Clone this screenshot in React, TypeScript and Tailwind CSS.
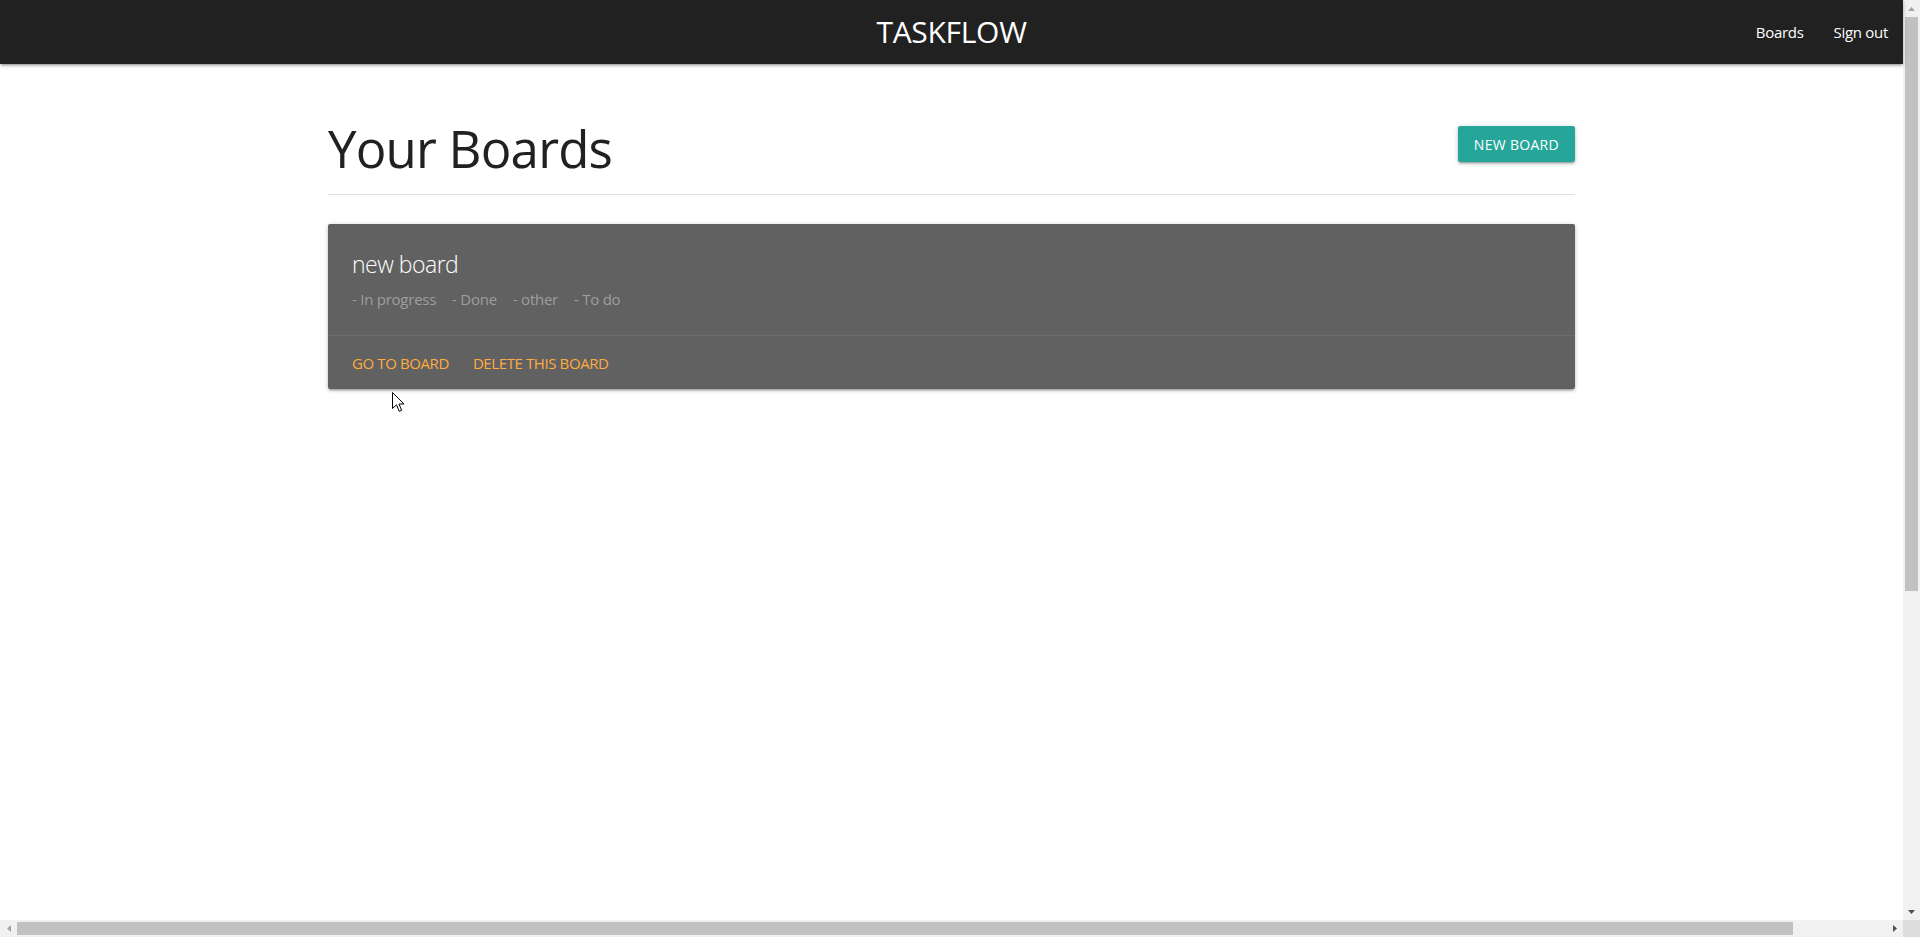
import React from "react";

const FONT = { fontFamily: '"Open Sans", "Noto Sans", sans-serif' };

function Cursor() {
  return (
    <svg width="13" height="21" viewBox="0 0 13 21" className="absolute left-[392px] top-[392px] z-50">
      <path
        d="M0.5 0.5 L0.5 16.5 L4.5 12.8 L7.2 19.3 L9.6 18.3 L7 12 L12 12 Z"
        fill="#ffffff"
        stroke="#000000"
        strokeWidth="1"
        strokeLinejoin="miter"
      />
    </svg>
  );
}

function VScrollbar() {
  return (
    <div className="w-[17px] shrink-0 bg-[#f1f1f1] flex flex-col">
      <div className="h-[17px] flex items-center justify-center">
        <svg width="7" height="4" viewBox="0 0 7 4">
          <path d="M0 4 L3.5 0 L7 4 Z" fill="#a3a3a3" />
        </svg>
      </div>
      <div className="flex-1 flex flex-col">
        <div className="mx-[2px] h-[574px] bg-[#c1c1c1]" />
      </div>
      <div className="h-[17px] flex items-center justify-center">
        <svg width="7" height="4" viewBox="0 0 7 4">
          <path d="M0 0 L7 0 L3.5 4 Z" fill="#505050" />
        </svg>
      </div>
    </div>
  );
}

function HScrollbar() {
  return (
    <div className="h-[17px] shrink-0 flex bg-[#f1f1f1]">
      <div className="w-[17px] flex items-center justify-center">
        <svg width="4" height="7" viewBox="0 0 4 7">
          <path d="M4 0 L0 3.5 L4 7 Z" fill="#a3a3a3" />
        </svg>
      </div>
      <div className="flex-1 flex items-center">
        <div className="h-[13px] w-[1776px] bg-[#c1c1c1]" />
      </div>
      <div className="w-[17px] flex items-center justify-center">
        <svg width="4" height="7" viewBox="0 0 4 7">
          <path d="M0 0 L4 3.5 L0 7 Z" fill="#505050" />
        </svg>
      </div>
      <div className="w-[17px] bg-[#dcdcdc]" />
    </div>
  );
}

export default function App() {
  const columns = ["In progress", "Done", "other", "To do"];
  return (
    <div className="relative w-full h-[937px] flex flex-col overflow-hidden bg-white" style={FONT}>
      <div className="flex flex-1 min-h-0">
        <div className="flex-1 min-w-0 flex flex-col">
          <nav className="relative z-10 h-16 bg-[#212121] grid grid-cols-[1fr_auto_1fr] items-center text-white shadow-[0_2px_2px_0_rgba(0,0,0,0.14),0_3px_1px_-2px_rgba(0,0,0,0.12),0_1px_5px_0_rgba(0,0,0,0.2)]">
            <div />
            <div className="text-[30px] leading-[64px] tracking-[-0.3px]">TASKFLOW</div>
            <div className="flex justify-end text-[15px] leading-[64px] tracking-[-0.3px]">
              <a className="px-[15px]">Boards</a>
              <a className="px-[15px]">Sign out</a>
            </div>
          </nav>
          <main className="w-[1247px] mx-auto">
            <div className="h-[131px] border-b border-[#e0e0e0] flex justify-between items-start">
              <h2 className="mt-[55px] text-[51px] leading-[59px] tracking-[-0.8px] text-[#212121]">Your Boards</h2>
              <button className="mt-[62px] h-9 px-4 rounded-[2px] bg-[#26a69a] text-white text-[14px] tracking-[0.3px] uppercase shadow-[0_2px_2px_0_rgba(0,0,0,0.14),0_3px_1px_-2px_rgba(0,0,0,0.12),0_1px_5px_0_rgba(0,0,0,0.2)]">
                New board
              </button>
            </div>
            <div className="mt-[29px] rounded-[2px] bg-[#616161] shadow-[0_2px_2px_0_rgba(0,0,0,0.14),0_3px_1px_-2px_rgba(0,0,0,0.12),0_1px_5px_0_rgba(0,0,0,0.2)]">
              <div className="p-6">
                <div className="text-[23px] leading-8 mb-2 font-light tracking-[-0.5px] text-white">new board</div>
                <div className="flex gap-4 text-[15px] leading-[22.5px] tracking-[-0.25px] text-[#9e9e9e]">
                  {columns.map((c) => (
                    <span key={c}>- {c}</span>
                  ))}
                </div>
              </div>
              <div className="border-t border-[rgba(160,160,160,0.2)] px-6 pt-4 pb-[15px] flex gap-6 text-[15px] leading-[22.5px] tracking-[-0.4px] text-[#ffab40] uppercase">
                <a>Go to board</a>
                <a>Delete this board</a>
              </div>
            </div>
          </main>
        </div>
        <VScrollbar />
      </div>
      <HScrollbar />
      <Cursor />
    </div>
  );
}
